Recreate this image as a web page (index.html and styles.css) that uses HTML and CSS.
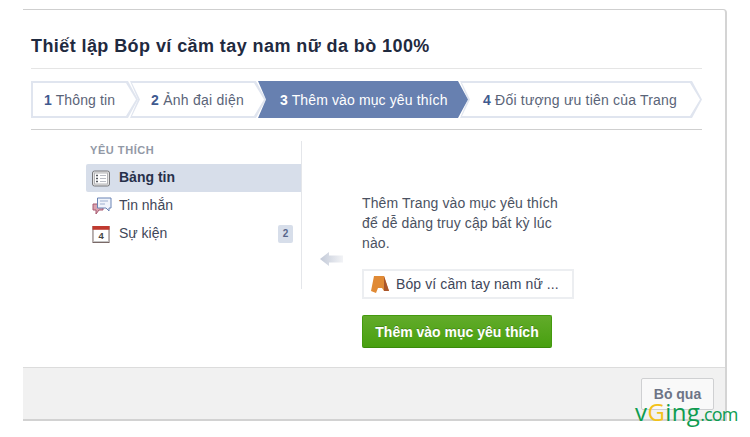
FILE: index.html
```html
<!DOCTYPE html>
<html lang="vi">
  <head>
    <meta charset="UTF-8" />
    <meta name="viewport" content="width=device-width, initial-scale=1.0" />
    <title>Thiết lập Trang</title>
    <link rel="stylesheet" href="styles.css">
  </head>

  <body>
    <div class="setup-panel">
      <div class="setup-main">
        <h1 class="setup-title">Thiết lập Bóp ví cầm tay nam nữ da bò 100%</h1>

        <div class="steps">
          <div class="step step-1"><b>1</b> Thông tin</div>
          <div class="step step-2"><b>2</b> Ảnh đại diện</div>
          <div class="step step-3"><b>3</b> Thêm vào mục yêu thích</div>
          <div class="step step-4"><b>4</b> Đối tượng ưu tiên của Trang</div>
        </div>

        <div class="content">
          <div class="sidebar">
            <div class="side-head">YÊU THÍCH</div>
            <div class="side-row selected">
              <svg class="side-icon" viewBox="0 0 18 16">
                <rect x="0.5" y="0.5" width="17" height="15" rx="2" fill="#e4e4e4" stroke="#77777a" />
                <rect x="2.5" y="2.5" width="13" height="11" fill="#fff" stroke="#b5b5b8" />
                <path d="M4 5h2M4 8h2M4 11h2" stroke="#55585f" stroke-width="1.4" />
                <path d="M8 5h6M8 8h6M8 11h6" stroke="#b9bcc4" />
              </svg>
              <span>Bảng tin</span>
            </div>
            <div class="side-row">
              <svg class="side-icon side-icon-big" viewBox="0 0 20 18">
                <path d="M1 7h10v6H7l-3 4v-4H1z" fill="#d9a3b0" stroke="#a85a70" />
                <path d="M5.500 1h13.500v10h-2v3l-3-3H5.500z" fill="#f0f4fb" stroke="#6a84b5" />
                <path d="M8 4h8M8 7h5" stroke="#9db0d0" />
              </svg>
              <span>Tin nhắn</span>
            </div>
            <div class="side-row">
              <svg class="side-icon" viewBox="0 0 18 18">
                <rect x="0.500" y="0.500" width="17" height="17" fill="#fff" stroke="#6d5a58" />
                <rect x="0" y="0" width="18" height="4" fill="#c0392f" />
                <text x="9" y="14" class="cal-day">4</text>
                <path d="M1 16.500h16" stroke="#bbb" />
              </svg>
              <span>Sự kiện</span>
              <span class="count">2</span>
            </div>
          </div>

          <div class="arrow-col">
            <svg class="arrow" viewBox="0 0 23 16">
              <defs>
                <linearGradient id="arrowFade" x1="0" x2="1" y1="0" y2="0">
                  <stop offset="0" stop-color="#c3cad8" />
                  <stop offset="1" stop-color="#f2f3f6" />
                </linearGradient>
              </defs>
              <path d="M0 8l9-7v3.500h14v7H9V15z" fill="url(#arrowFade)" />
            </svg>
          </div>

          <div class="promo">
            <p class="promo-text">Thêm Trang vào mục yêu thích để dễ dàng truy cập bất kỳ lúc nào.</p>
            <div class="page-chip">
              <svg class="page-icon" viewBox="0 0 18 17">
                <path d="M3 0h10l5 15h-5l-2-3H7l-2 5-5-2z" fill="#e08a35" />
                <path d="M13 0l5 15h-5z" fill="#a9552b" />
              </svg>
              <span class="page-name">Bóp ví cầm tay nam nữ ...</span>
            </div>
            <button class="add-btn" type="button">Thêm vào mục yêu thích</button>
          </div>
        </div>
      </div>

      <div class="setup-footer">
        <button class="skip-btn" type="button">Bỏ qua</button>
      </div>
    </div>

    <div class="watermark">v<span class="wm-g">G</span>ing<span class="wm-com">.com</span></div>
  </body>
</html>
```

FILE: styles.css
```css
* {
  margin: 0;
  padding: 0;
  box-sizing: border-box;
}

body {
  font-family: "Liberation Sans", Arial, sans-serif;
  background-color: #fff;
  color: #3b4355;
  position: relative;
  height: 437px;
  overflow: hidden;
}

.setup-panel {
  width: 704px;
  height: 412px;
  margin: 9px 0 0 23px;
  border-top: 1px solid #cfcfcf;
  border-right: 2px solid #d4d4d4;
  border-radius: 0 4px 0 0;
  display: flex;
  flex-direction: column;
}

.setup-main {
  flex: 1;
  padding: 0 23px 0 8px;
}

.setup-title {
  height: 59px;
  padding-top: 26px;
  font-size: 18px;
  line-height: 21px;
  letter-spacing: 0.42px;
  color: #1f2a3f;
  border-bottom: 1px solid #e5e5e5;
}

.steps {
  display: flex;
  margin-top: 12px;
  height: 37px;
}

.step {
  position: relative;
  flex-shrink: 0;
  height: 37px;
  line-height: 39px;
  font-size: 14px;
  letter-spacing: 0.12px;
  color: #5a6478;
  background-color: #e0e5ef;
  white-space: nowrap;
  z-index: 0;
  clip-path: polygon(0 0, calc(100% - 10px) 0, 100% 50%, calc(100% - 10px) 100%, 0 100%, 8px 50%);
}

.step::before {
  content: "";
  position: absolute;
  inset: 2px;
  background-color: #fff;
  z-index: -1;
  clip-path: inherit;
}

.step b {
  color: #3f5a8f;
}

.step-1 {
  width: 107px;
  padding-left: 13px;
  clip-path: polygon(0 0, calc(100% - 10px) 0, 100% 50%, calc(100% - 10px) 100%, 0 100%);
}

.step-2 {
  width: 136px;
  margin-left: -8px;
  padding-left: 21px;
  letter-spacing: 0.25px;
}

.step-3 {
  width: 210px;
  margin-left: -8px;
  padding-left: 22px;
  color: #fff;
  background-color: #6780b0;
  z-index: 1;
}

.step-3::before {
  display: none;
}

.step-3 b {
  color: #fff;
}

.step-4 {
  width: 242px;
  margin-left: -8px;
  padding-left: 23px;
  letter-spacing: 0.2px;
}

.content {
  display: flex;
  margin-top: 11px;
  border-top: 1px solid #cfcfcf;
  padding-top: 11px;
  padding-left: 55px;
}

.sidebar {
  width: 216px;
  height: 148px;
  border-right: 1px solid #e4e6ea;
}

.side-head {
  height: 23px;
  padding: 3px 0 0 4px;
  font-size: 11px;
  line-height: 13px;
  font-weight: bold;
  letter-spacing: 0.55px;
  color: #9299a6;
}

.side-row {
  display: flex;
  align-items: center;
  height: 28px;
  padding: 0 8px 0 6px;
  font-size: 14px;
  color: #3f4759;
}

.side-row > span:first-of-type {
  margin-top: -2px;
}

.side-row.selected {
  background-color: #d7deea;
  border-radius: 2px 0 0 2px;
  font-weight: bold;
  color: #27304a;
}

.side-icon {
  width: 18px;
  height: 17px;
  margin-right: 9px;
  flex-shrink: 0;
}

.side-icon-big {
  width: 20px;
  height: 18px;
  margin-right: 7px;
}

.cal-day {
  font-size: 10px;
  font-weight: bold;
  text-anchor: middle;
  fill: #444;
}

.count {
  margin-left: auto;
  width: 15px;
  height: 18px;
  line-height: 18px;
  text-align: center;
  font-size: 10px;
  font-weight: bold;
  color: #56658a;
  background-color: #d7deea;
  border-radius: 2px;
}

.arrow-col {
  width: 60px;
  padding: 110px 0 0 18px;
}

.arrow {
  display: block;
  width: 23px;
  height: 16px;
}

.promo {
  width: 212px;
  padding-top: 52px;
}

.promo-text {
  width: 205px;
  font-size: 14px;
  line-height: 20px;
  letter-spacing: 0.1px;
  color: #4b5262;
}

.page-chip {
  display: flex;
  align-items: center;
  height: 30px;
  margin-top: 16px;
  padding-left: 7px;
  border: 2px solid #eceef1;
  font-size: 14px;
  letter-spacing: 0.1px;
  color: #3e4558;
}

.page-icon {
  width: 18px;
  height: 17px;
  margin-right: 7px;
  flex-shrink: 0;
}

.page-name {
  white-space: nowrap;
}

.add-btn {
  display: block;
  width: 190px;
  height: 33px;
  margin-top: 16px;
  font-family: inherit;
  font-size: 14px;
  font-weight: bold;
  color: #fff;
  background: linear-gradient(#62ab2a, #48a010);
  border: 1px solid #449a0e;
  border-bottom-color: #3a8a0a;
  border-radius: 2px;
  text-shadow: 0 -1px 0 rgba(0, 0, 0, 0.2);
}

.setup-footer {
  height: 54px;
  padding: 10px 11px 0 0;
  display: flex;
  justify-content: flex-end;
  align-items: flex-start;
  background-color: #f1f1f1;
  border-top: 1px solid #dcdcdc;
  border-bottom: 2px solid #d2d2d2;
}

.skip-btn {
  width: 73px;
  height: 32px;
  font-family: inherit;
  font-size: 14px;
  font-weight: bold;
  color: #6d7486;
  background-color: #f9f9f9;
  border: 1px solid #cfd0d2;
  border-radius: 2px;
}

.watermark {
  position: absolute;
  left: 635px;
  top: 397px;
  font-family: "Open Sans", Arial, sans-serif;
  font-size: 24px;
  line-height: 30px;
  letter-spacing: 0.4px;
  color: #0e9c50;
  white-space: nowrap;
}

.wm-g {
  color: #f3c21a;
}

.wm-com {
  font-size: 18px;
  letter-spacing: -0.9px;
}
```
